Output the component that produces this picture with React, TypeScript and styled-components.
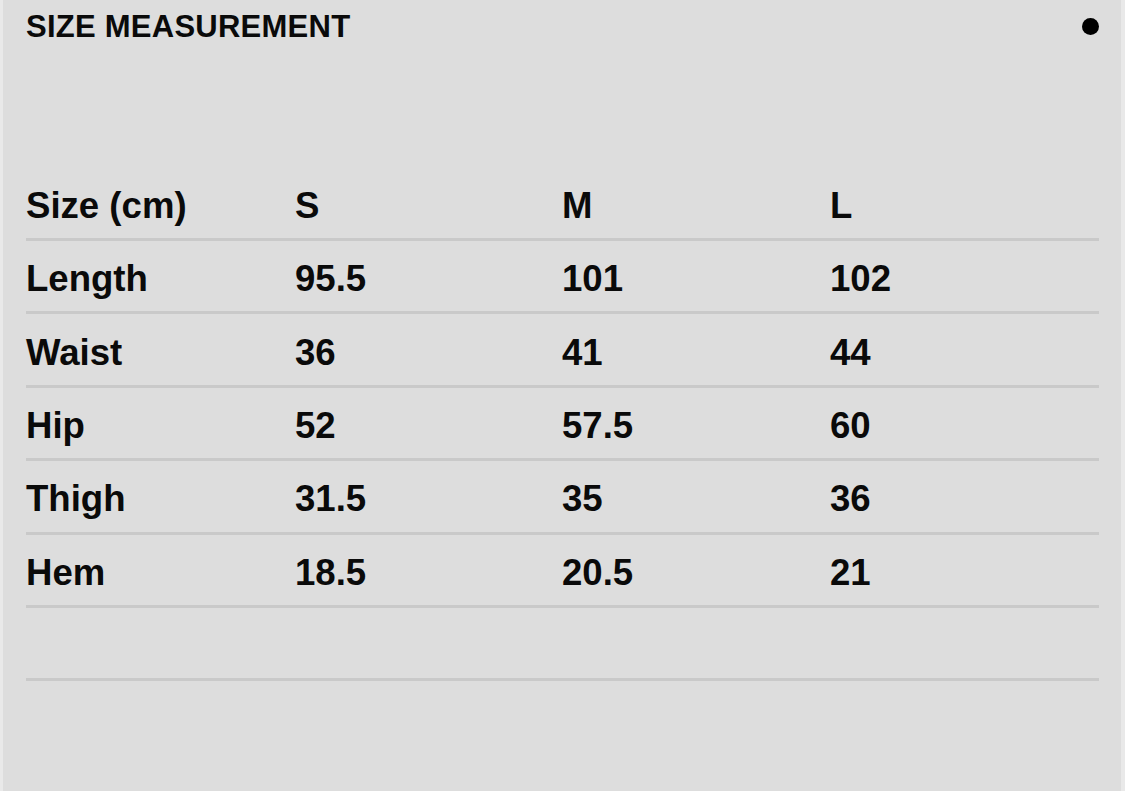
import React from 'react';
import styled, { createGlobalStyle } from 'styled-components';

const GlobalStyle = createGlobalStyle`
  html, body {
    margin: 0;
    padding: 0;
    background: #dddddd;
  }
  * {
    box-sizing: border-box;
  }
`;

const Page = styled.div`
  width: 1125px;
  height: 791px;
  overflow: hidden;
  background: #dddddd;
  border-left: 3px solid #e9e9e9;
  border-right: 4px solid #e9e9e9;
  padding: 0 22px 0 23px;
  font-family: 'Liberation Sans', Arial, Helvetica, sans-serif;
  color: #0a0a0a;
`;

const Header = styled.div`
  height: 54px;
  display: flex;
  align-items: center;
  justify-content: space-between;
`;

const Title = styled.h1`
  margin: 0;
  font-size: 31px;
  line-height: 38px;
  font-weight: 700;
  letter-spacing: 0.25px;
`;

const Dot = styled.span`
  width: 17px;
  height: 17px;
  border-radius: 50%;
  background: #000;
  margin-top: -1px;
`;

const Table = styled.div`
  margin-top: 113.6px;
  display: flex;
  flex-direction: column;
`;

const Row = styled.div`
  height: 73.4px;
  display: grid;
  grid-template-columns: 269px 267px 268px 1fr;
  align-items: center;
  padding-top: 6px;
  border-bottom: 3px solid #c9c9c9;
`;

const Cell = styled.div`
  font-size: 36.6px;
  line-height: 44px;
  font-weight: 700;
  white-space: nowrap;
`;

const sizes = ['S', 'M', 'L'];

const rows: [string, string[]][] = [
  ['Length', ['95.5', '101', '102']],
  ['Waist', ['36', '41', '44']],
  ['Hip', ['52', '57.5', '60']],
  ['Thigh', ['31.5', '35', '36']],
  ['Hem', ['18.5', '20.5', '21']],
];

export default function App() {
  return (
    <>
      <GlobalStyle />
      <Page>
        <Header>
          <Title>SIZE MEASUREMENT</Title>
          <Dot />
        </Header>
        <Table>
          <Row>
            <Cell>Size (cm)</Cell>
            {sizes.map((s) => (
              <Cell key={s}>{s}</Cell>
            ))}
          </Row>
          {rows.map(([label, values]) => (
            <Row key={label}>
              <Cell>{label}</Cell>
              {values.map((v, i) => (
                <Cell key={i}>{v}</Cell>
              ))}
            </Row>
          ))}
          <Row />
        </Table>
      </Page>
    </>
  );
}
